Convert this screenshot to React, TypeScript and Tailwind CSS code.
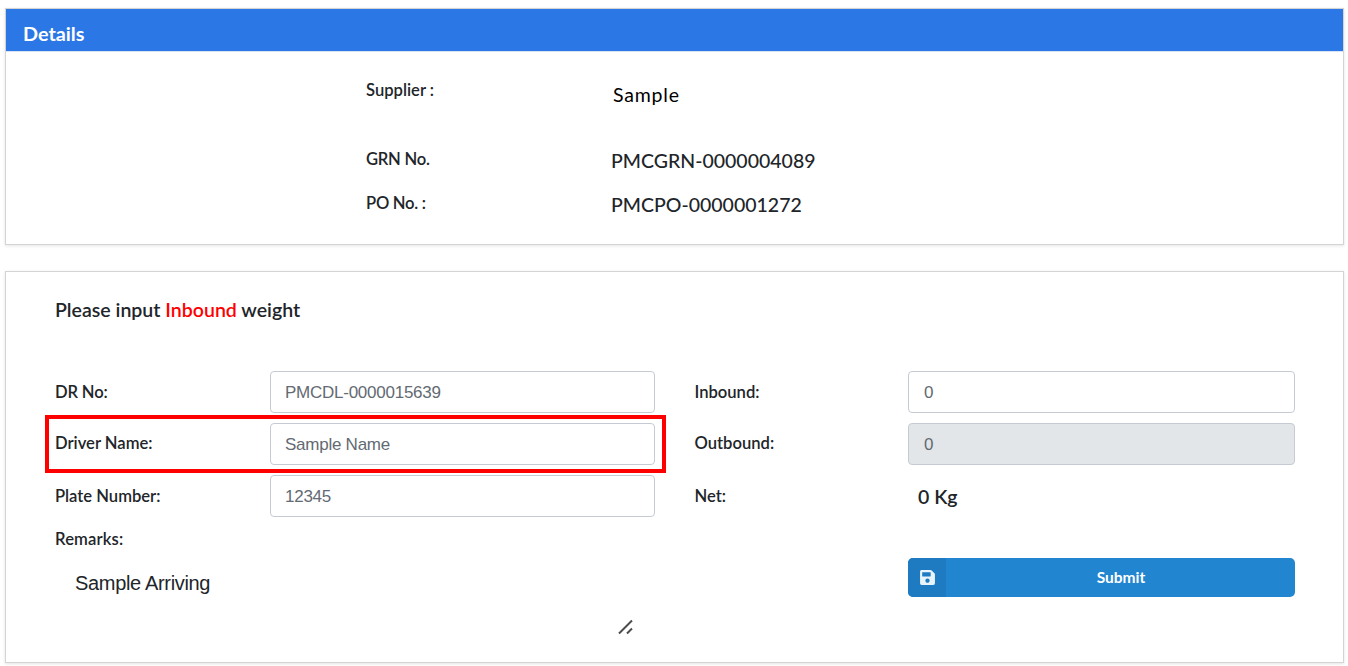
import type { ReactNode } from "react";

function Label({ children, className = "" }: { children: ReactNode; className?: string }) {
  return (
    <span className={`font-['Lato',sans-serif] text-[16.6px] leading-6 font-semibold whitespace-nowrap text-[#212529] ${className}`}>
      {children}
    </span>
  );
}

function DetailRow({ label, children, className, labelClass = "" }: { label: string; children: ReactNode; className: string; labelClass?: string }) {
  return (
    <div className={`flex items-start ${className}`}>
      <div className="flex w-[246px] shrink-0">
        <Label className={labelClass}>{label}</Label>
      </div>
      {children}
    </div>
  );
}

function Field({ value, disabled = false, label, className = "pl-3.5" }: { value: string; disabled?: boolean; label: string; className?: string }) {
  return (
    <input
      aria-label={label}
      defaultValue={value}
      disabled={disabled}
      className={`h-[42px] min-w-0 flex-1 rounded border border-[#c6cbd3] bg-white pt-0.5 pr-3.5 font-['Liberation_Sans',sans-serif] text-[17px] tracking-[-0.25px] text-[#636a72] outline-none disabled:bg-[#e2e6e9] ${className}`}
    />
  );
}

function Details() {
  return (
    <section className="h-[237px] border border-[#d4d4d5] bg-white shadow-[0_1px_3px_rgba(34,36,38,0.12)]">
      <header className="flex h-[43px] items-center border-b border-[#d9e3f5] bg-[#2b77e5] pt-1.5 pl-[17px]">
        <h1 className="font-['Lato',sans-serif] text-[19.8px] leading-6 font-bold text-white">Details</h1>
      </header>
      <div className="pt-[26px] pl-[360px]">
        <DetailRow label="Supplier :" className="h-[69px]">
          <span className="pt-[5px] pl-px font-['Lato',sans-serif] text-[19.5px] leading-6 tracking-[0.8px] text-black">Sample</span>
        </DetailRow>
        <DetailRow label="GRN No." className="h-11" labelClass="tracking-[-0.25px]">
          <span className="-ml-px pt-0.5 font-['Lato',sans-serif] text-[19.5px] leading-6 font-medium text-[#212529]">PMCGRN-0000004089</span>
        </DetailRow>
        <DetailRow label="PO No. :" className="h-11" labelClass="tracking-[-0.25px]">
          <span className="-ml-px pt-0.5 font-['Lato',sans-serif] text-[19.5px] leading-6 font-medium text-[#212529]">PMCPO-0000001272</span>
        </DetailRow>
      </div>
    </section>
  );
}

function SaveIcon() {
  return (
    <svg viewBox="0 0 448 512" className="h-[17px] w-[15px]" fill="#e9f3fb" aria-hidden="true">
      <path d="M433.941 129.941l-83.882-83.882A48 48 0 0 0 316.118 32H48C21.49 32 0 53.49 0 80v352c0 26.51 21.49 48 48 48h352c26.51 0 48-21.49 48-48V163.882a48 48 0 0 0-14.059-33.941zM224 416c-35.346 0-64-28.654-64-64 0-35.346 28.654-64 64-64s64 28.654 64 64c0 35.346-28.654 64-64 64zm96-304.52V212c0 6.627-5.373 12-12 12H76c-6.627 0-12-5.373-12-12V108c0-6.627 5.373-12 12-12h228.52c3.183 0 6.235 1.264 8.485 3.515l3.48 3.48A11.996 11.996 0 0 1 320 111.48z" />
    </svg>
  );
}

function WeightForm() {
  return (
    <section className="mt-[26px] h-[392px] border border-[#d4d4d5] bg-white pt-[26px] pr-12 pl-[49px] shadow-[0_1px_3px_rgba(34,36,38,0.12)]">
      <h2 className="font-['Lato',sans-serif] text-[19.55px] leading-6 font-semibold text-[#212529]">
        Please input <span className="text-[#ff0000]">Inbound</span> weight
      </h2>
      <div className="flex gap-[39px] pt-[49px]">
        <div className="flex w-[600px] shrink-0 flex-col">
          <div className="flex h-[52px] items-start">
            <Label className="w-[215px] pt-[9px] tracking-[-0.15px]">DR No:</Label>
            <Field label="DR No" value="PMCDL-0000015639" />
          </div>
          <div className="relative flex h-[52px] items-start">
            <Label className="w-[215px] pt-2">Driver Name:</Label>
            <Field label="Driver Name" value="Sample Name" />
            <div className="pointer-events-none absolute -top-2 -left-2.5 h-[58px] w-[621px] border-4 border-[#ff0000]" />
          </div>
          <div className="flex h-[52px] items-start">
            <Label className="w-[215px] pt-[9px]">Plate Number:</Label>
            <Field label="Plate Number" value="12345" />
          </div>
          <Label className="tracking-[0.15px]">Remarks:</Label>
          <div className="relative mt-2 ml-[5px] h-[78px] w-[575px]">
            <textarea
              aria-label="Remarks"
              defaultValue="Sample Arriving"
              className="block h-full w-full resize-none overflow-hidden bg-transparent px-[15px] pt-3 font-['Liberation_Sans',sans-serif] text-xl leading-6 tracking-[-0.33px] text-[#212529] outline-none"
            />
            <svg viewBox="0 0 16 16" className="absolute right-px bottom-0.5 size-4" fill="none" stroke="#4c4c4c" strokeWidth="2" aria-hidden="true">
              <path d="M1 14.5 14 1.5M9 14.5l5-5" />
            </svg>
          </div>
        </div>
        <div className="flex min-w-0 flex-1 flex-col">
          <div className="flex h-[52px] items-start">
            <Label className="w-[214px] pt-[9px] pl-[0.5px]">Inbound:</Label>
            <Field label="Inbound" value="0" className="pl-[15px]" />
          </div>
          <div className="flex h-[52px] items-start">
            <Label className="w-[214px] pt-2 pl-[0.5px]">Outbound:</Label>
            <Field label="Outbound" value="0" disabled className="pl-[15px]" />
          </div>
          <div className="flex h-[52px] items-start">
            <Label className="w-[214px] pt-[9px] pl-[0.5px]">Net:</Label>
            <span className="pt-2.5 pl-2.5 font-['Lato',sans-serif] text-[19.5px] leading-6 font-semibold text-[#212529]">0 Kg</span>
          </div>
          <button className="mt-[31px] ml-[214px] flex h-[39px] items-stretch overflow-hidden rounded-[5px] bg-[#2185d0]">
            <span className="flex w-[38px] items-center justify-center bg-[#1e7bc2] pl-px">
              <SaveIcon />
            </span>
            <span className="flex-1 self-center pb-0.5 pl-px font-['Lato',sans-serif] text-[15.5px] leading-5 font-bold text-white">Submit</span>
          </button>
        </div>
      </div>
    </section>
  );
}

export default function App() {
  return (
    <main className="h-[666px] overflow-hidden bg-white pt-2 pr-1 pl-[5px]">
      <Details />
      <WeightForm />
    </main>
  );
}
